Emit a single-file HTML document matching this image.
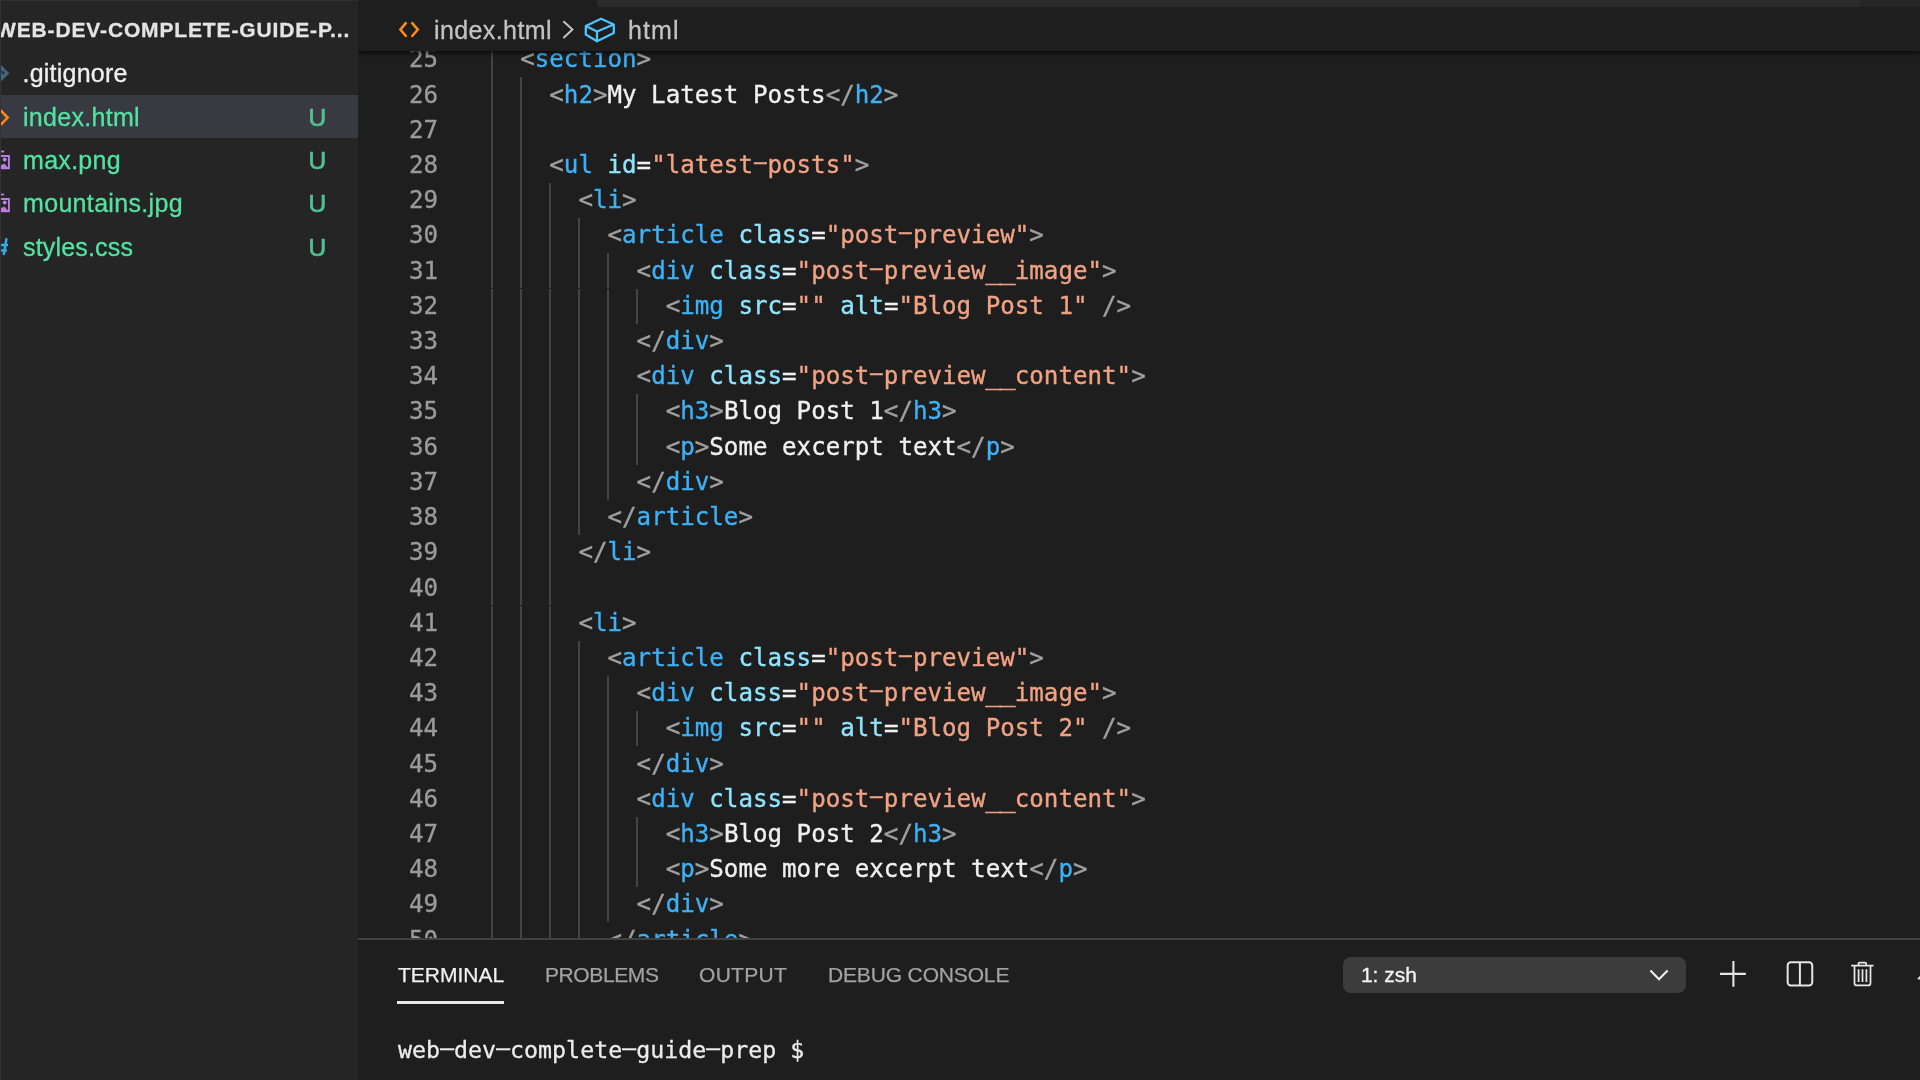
<!DOCTYPE html>
<html lang="en">
<head>
<meta charset="utf-8">
<title>index.html — web-dev-complete-guide-prep</title>
<style>
*{box-sizing:border-box;margin:0;padding:0}
html,body{width:1920px;height:1080px;overflow:hidden;background:#1e1e1e}
body{position:relative;font-family:"Liberation Sans",sans-serif;color:#ccc}
.abs{position:absolute}
.fg{position:absolute;left:0;top:0;width:100%;height:100%;will-change:transform}
/* ---------- sidebar ---------- */
#side{position:absolute;left:0;top:0;width:358px;height:1080px;background:#252526;overflow:hidden}
#side .hdr{position:absolute;left:-4px;top:16.5px;font-weight:bold;font-size:21px;line-height:26px;letter-spacing:.86px;color:#e4e4e4;white-space:nowrap;-webkit-text-stroke:.3px currentColor}
#side .selbg{position:absolute;left:0;top:95px;width:358px;height:43px;background:#393941}
#side .edge{position:absolute;left:0;top:0;width:1px;height:1080px;background:#333336}
#side .topl{position:absolute;left:0;top:0;width:358px;height:1px;background:#303032}
.row{position:absolute;left:0;width:358px;height:43.4px}
.row .nm{position:absolute;left:23px;top:0;line-height:43.4px;font-size:25px;white-space:nowrap;color:#f0f0f0;-webkit-text-stroke:.3px currentColor}
.row.u .nm{color:#52e3a1}
.row .st{position:absolute;left:308.5px;top:0;line-height:43.4px;font-size:24.5px;color:#4fc391;-webkit-text-stroke:.7px currentColor;letter-spacing:0}
.row svg{position:absolute;left:0;top:0}
/* ---------- editor ---------- */
#ed{position:absolute;left:358px;top:0;width:1562px;height:940px;background:#1e1e1e;overflow:hidden}
#edin{will-change:transform;position:absolute;left:-358px;top:0;width:1920px;height:940px}
.ln{position:absolute;left:380px;width:58px;text-align:right;font-family:"DejaVu Sans Mono","Liberation Mono",monospace;font-size:24.167px;line-height:35.21px;height:35.21px;color:#9a9a9a;white-space:pre}
.cl{position:absolute;font-family:"DejaVu Sans Mono","Liberation Mono",monospace;font-size:24.167px;line-height:35.21px;height:35.21px;white-space:pre;color:#e4e4e4}
.t{color:#3db1f7}.b{color:#a0a0a0}.a{color:#8fe4fd}.s{color:#f0a283}.x{color:#f0f0f0}
.cl,.ln{-webkit-text-stroke:.35px currentColor}
.us{display:inline-block;transform:scaleX(1.12)}
.h{display:inline-block;transform:translateY(-2.7px) scale(2,.85)}
.g{position:absolute;width:2px;background:#444;margin-top:-.2px}
.gap{position:absolute;left:480px;width:170px;height:1.4px;background:#1e1e1e}
#crumbwrap{position:absolute;left:358px;top:0;width:1562px;height:70px;overflow:hidden;z-index:5}
#crumb{position:absolute;left:0;top:0;width:1562px;height:51px;background:#1e1e1e;box-shadow:0 2px 5px rgba(0,0,0,.7)}
#crumb .strip2{position:absolute;left:1502px;top:0;right:0;height:7px;background:#262627}
#crumb .strip{position:absolute;left:239px;top:0;right:0;height:7px;background:#2b2b2c}
#crumb .tx{position:absolute;top:12px;line-height:36px;font-size:25px;color:#c2c2c2;white-space:nowrap;-webkit-text-stroke:.3px currentColor}
/* ---------- panel ---------- */
#panel{position:absolute;left:358px;top:938px;width:1562px;height:142px;background:#1e1e1e;border-top:2px solid #414141;z-index:6}
.tab{position:absolute;top:21px;font-size:21px;line-height:28px;color:#a2a2a2;white-space:nowrap;-webkit-text-stroke:.25px currentColor}
.tab.on{color:#f0f0f0}
.tab.on:after{content:"";position:absolute;left:-1px;right:0;top:40px;height:3px;background:#e7e7e7}
#term{position:absolute;left:40px;top:93px;font-family:"DejaVu Sans Mono","Liberation Mono",monospace;font-size:23.27px;line-height:34px;color:#ececec;white-space:pre;-webkit-text-stroke:.3px currentColor}
#sel{position:absolute;left:985.4px;top:16.6px;width:342.2px;height:36px;border-radius:8px;background:#3c3c3c}
#sel span{position:absolute;left:17.5px;top:0;line-height:36px;font-size:21px;color:#f4f4f4;-webkit-text-stroke:.3px currentColor}
#term .h{transform:translateY(-1.7px) scale(2.3,.85)}
</style>
</head>
<body>
<div id="side">
  <div class="selbg"></div>
  <div class="fg">
  <div class="hdr">WEB-DEV-COMPLETE-GUIDE-P...</div>
  <div class="row" style="top:51.6px"><svg width="20" height="44" viewBox="0 0 20 44"><path d="M-9.3 21.2 L0 11.9 L9.3 21.2 L0 30.5 Z" fill="#3f6777"/><path d="M-2 17.2 L3.2 20.6" stroke="#26343b" stroke-width="1.2" fill="none"/><circle cx="3.3" cy="20.8" r="1.4" fill="#26343b"/></svg><span class="nm" style="left:22.5px;letter-spacing:.22px">.gitignore</span></div>
  <div class="row u" style="top:95.6px"><svg width="20" height="44" viewBox="0 0 20 44"><path d="M0.6 14.3 L7.6 21.6 L0.6 28.9" fill="none" stroke="#ff8a17" stroke-width="2.6"/></svg><span class="nm" style="letter-spacing:.3px">index.html</span><span class="st">U</span></div>
  <div class="row u" style="top:138.9px"><svg width="20" height="44" viewBox="0 0 20 44"><path d="M-3 12.5 H4.2" stroke="#b97ee0" stroke-width="1.8"/><path d="M-8 17 H8.9 V29.4 H-8 Z" fill="none" stroke="#b97ee0" stroke-width="1.9"/><circle cx="4.7" cy="20.6" r="2" fill="#b97ee0"/><path d="M-8 29.4 L-1.5 22.8 L1.6 26 L4.3 24.6 L8.9 29.4 Z" fill="#b97ee0"/></svg><span class="nm" style="letter-spacing:.3px">max.png</span><span class="st">U</span></div>
  <div class="row u" style="top:182.3px"><svg width="20" height="44" viewBox="0 0 20 44"><path d="M-3 12.5 H4.2" stroke="#b97ee0" stroke-width="1.8"/><path d="M-8 17 H8.9 V29.4 H-8 Z" fill="none" stroke="#b97ee0" stroke-width="1.9"/><circle cx="4.7" cy="20.6" r="2" fill="#b97ee0"/><path d="M-8 29.4 L-1.5 22.8 L1.6 26 L4.3 24.6 L8.9 29.4 Z" fill="#b97ee0"/></svg><span class="nm" style="letter-spacing:.33px">mountains.jpg</span><span class="st">U</span></div>
  <div class="row u" style="top:225.7px"><svg width="20" height="44" viewBox="0 0 20 44"><path d="M-2 19 H8 M-3 24.4 H7 M6.5 12.3 L3.7 29 M-0.2 12.3 L-3 29" fill="none" stroke="#36a9e1" stroke-width="2.5"/></svg><span class="nm" style="letter-spacing:.17px">styles.css</span><span class="st">U</span></div>
  </div>
  <div class="edge"></div><div class="topl"></div>
</div>

<div id="ed"><div id="edin">
<div class="g" style="left:491.00px;top:42.34px;height:915.46px"></div>
<div class="g" style="left:520.00px;top:77.56px;height:880.25px"></div>
<div class="g" style="left:549.30px;top:183.19px;height:774.62px"></div>
<div class="g" style="left:578.40px;top:218.40px;height:316.89px"></div>
<div class="g" style="left:578.40px;top:640.92px;height:316.89px"></div>
<div class="g" style="left:606.70px;top:253.60px;height:246.47px"></div>
<div class="g" style="left:606.70px;top:676.12px;height:246.47px"></div>
<div class="g" style="left:635.60px;top:288.81px;height:35.21px"></div>
<div class="g" style="left:635.60px;top:394.45px;height:70.42px"></div>
<div class="g" style="left:635.60px;top:711.34px;height:35.21px"></div>
<div class="g" style="left:635.60px;top:816.97px;height:70.42px"></div>
<div class="gap" style="top:287.6px"></div><div class="gap" style="top:604.6px"></div>
<div class="ln" style="top:42.34px">25</div>
<div class="ln" style="top:77.56px">26</div>
<div class="ln" style="top:112.77px">27</div>
<div class="ln" style="top:147.97px">28</div>
<div class="ln" style="top:183.19px">29</div>
<div class="ln" style="top:218.40px">30</div>
<div class="ln" style="top:253.60px">31</div>
<div class="ln" style="top:288.81px">32</div>
<div class="ln" style="top:324.02px">33</div>
<div class="ln" style="top:359.24px">34</div>
<div class="ln" style="top:394.45px">35</div>
<div class="ln" style="top:429.65px">36</div>
<div class="ln" style="top:464.87px">37</div>
<div class="ln" style="top:500.08px">38</div>
<div class="ln" style="top:535.28px">39</div>
<div class="ln" style="top:570.50px">40</div>
<div class="ln" style="top:605.71px">41</div>
<div class="ln" style="top:640.92px">42</div>
<div class="ln" style="top:676.12px">43</div>
<div class="ln" style="top:711.34px">44</div>
<div class="ln" style="top:746.55px">45</div>
<div class="ln" style="top:781.75px">46</div>
<div class="ln" style="top:816.97px">47</div>
<div class="ln" style="top:852.18px">48</div>
<div class="ln" style="top:887.38px">49</div>
<div class="ln" style="top:922.60px">50</div>
<div class="cl" style="top:42.34px;left:520.20px"><span class="b">&lt;</span><span class="t">section</span><span class="b">&gt;</span></div>
<div class="cl" style="top:77.56px;left:549.30px"><span class="b">&lt;</span><span class="t">h2</span><span class="b">&gt;</span><span class="x">My Latest Posts</span><span class="b">&lt;/</span><span class="t">h2</span><span class="b">&gt;</span></div>
<div class="cl" style="top:147.97px;left:549.30px"><span class="b">&lt;</span><span class="t">ul</span> <span class="a">id</span><span class="x">=</span><span class="s">&quot;latest<span class="h">-</span>posts&quot;</span><span class="b">&gt;</span></div>
<div class="cl" style="top:183.19px;left:578.40px"><span class="b">&lt;</span><span class="t">li</span><span class="b">&gt;</span></div>
<div class="cl" style="top:218.40px;left:607.50px"><span class="b">&lt;</span><span class="t">article</span> <span class="a">class</span><span class="x">=</span><span class="s">&quot;post<span class="h">-</span>preview&quot;</span><span class="b">&gt;</span></div>
<div class="cl" style="top:253.60px;left:636.60px"><span class="b">&lt;</span><span class="t">div</span> <span class="a">class</span><span class="x">=</span><span class="s">&quot;post<span class="h">-</span>preview<span class="us">_</span><span class="us">_</span>image&quot;</span><span class="b">&gt;</span></div>
<div class="cl" style="top:288.81px;left:665.70px"><span class="b">&lt;</span><span class="t">img</span> <span class="a">src</span><span class="x">=</span><span class="s">&quot;&quot;</span> <span class="a">alt</span><span class="x">=</span><span class="s">&quot;Blog Post 1&quot;</span> <span class="b">/&gt;</span></div>
<div class="cl" style="top:324.02px;left:636.60px"><span class="b">&lt;/</span><span class="t">div</span><span class="b">&gt;</span></div>
<div class="cl" style="top:359.24px;left:636.60px"><span class="b">&lt;</span><span class="t">div</span> <span class="a">class</span><span class="x">=</span><span class="s">&quot;post<span class="h">-</span>preview<span class="us">_</span><span class="us">_</span>content&quot;</span><span class="b">&gt;</span></div>
<div class="cl" style="top:394.45px;left:665.70px"><span class="b">&lt;</span><span class="t">h3</span><span class="b">&gt;</span><span class="x">Blog Post 1</span><span class="b">&lt;/</span><span class="t">h3</span><span class="b">&gt;</span></div>
<div class="cl" style="top:429.65px;left:665.70px"><span class="b">&lt;</span><span class="t">p</span><span class="b">&gt;</span><span class="x">Some excerpt text</span><span class="b">&lt;/</span><span class="t">p</span><span class="b">&gt;</span></div>
<div class="cl" style="top:464.87px;left:636.60px"><span class="b">&lt;/</span><span class="t">div</span><span class="b">&gt;</span></div>
<div class="cl" style="top:500.08px;left:607.50px"><span class="b">&lt;/</span><span class="t">article</span><span class="b">&gt;</span></div>
<div class="cl" style="top:535.28px;left:578.40px"><span class="b">&lt;/</span><span class="t">li</span><span class="b">&gt;</span></div>
<div class="cl" style="top:605.71px;left:578.40px"><span class="b">&lt;</span><span class="t">li</span><span class="b">&gt;</span></div>
<div class="cl" style="top:640.92px;left:607.50px"><span class="b">&lt;</span><span class="t">article</span> <span class="a">class</span><span class="x">=</span><span class="s">&quot;post<span class="h">-</span>preview&quot;</span><span class="b">&gt;</span></div>
<div class="cl" style="top:676.12px;left:636.60px"><span class="b">&lt;</span><span class="t">div</span> <span class="a">class</span><span class="x">=</span><span class="s">&quot;post<span class="h">-</span>preview<span class="us">_</span><span class="us">_</span>image&quot;</span><span class="b">&gt;</span></div>
<div class="cl" style="top:711.34px;left:665.70px"><span class="b">&lt;</span><span class="t">img</span> <span class="a">src</span><span class="x">=</span><span class="s">&quot;&quot;</span> <span class="a">alt</span><span class="x">=</span><span class="s">&quot;Blog Post 2&quot;</span> <span class="b">/&gt;</span></div>
<div class="cl" style="top:746.55px;left:636.60px"><span class="b">&lt;/</span><span class="t">div</span><span class="b">&gt;</span></div>
<div class="cl" style="top:781.75px;left:636.60px"><span class="b">&lt;</span><span class="t">div</span> <span class="a">class</span><span class="x">=</span><span class="s">&quot;post<span class="h">-</span>preview<span class="us">_</span><span class="us">_</span>content&quot;</span><span class="b">&gt;</span></div>
<div class="cl" style="top:816.97px;left:665.70px"><span class="b">&lt;</span><span class="t">h3</span><span class="b">&gt;</span><span class="x">Blog Post 2</span><span class="b">&lt;/</span><span class="t">h3</span><span class="b">&gt;</span></div>
<div class="cl" style="top:852.18px;left:665.70px"><span class="b">&lt;</span><span class="t">p</span><span class="b">&gt;</span><span class="x">Some more excerpt text</span><span class="b">&lt;/</span><span class="t">p</span><span class="b">&gt;</span></div>
<div class="cl" style="top:887.38px;left:636.60px"><span class="b">&lt;/</span><span class="t">div</span><span class="b">&gt;</span></div>
<div class="cl" style="top:922.60px;left:607.50px"><span class="b">&lt;/</span><span class="t">article</span><span class="b">&gt;</span></div>
</div></div>

<div id="crumbwrap"><div id="crumb">
  <div class="strip"></div><div class="strip2"></div>
  <div class="fg">
  <svg class="abs" style="left:38px;top:18px" width="28" height="24" viewBox="0 0 28 24"><path d="M10.4 4.4 L4.4 11.6 L10.4 18.8 M15.6 4.4 L21.8 11.6 L15.6 18.8" fill="none" stroke="#ff8a17" stroke-width="2.5"/></svg>
  <span class="tx" style="left:76px;letter-spacing:.4px">index.html</span>
  <svg class="abs" style="left:200px;top:18px" width="20" height="24" viewBox="0 0 20 24"><path d="M5.4 3.2 L14.4 11.6 L5.4 20" fill="none" stroke="#c4c4c4" stroke-width="2"/></svg>
  <svg class="abs" style="left:225px;top:14px" width="34" height="32" viewBox="0 0 34 32"><path d="M2.8 12 L18 4.7 L30.8 10.5 L14 17.5 Z M2.8 12 L2.8 20.5 L14 27.3 L14 17.5 M14 27.3 L30.8 19 L30.8 10.5" fill="none" stroke="#4cc4ff" stroke-width="2.3" stroke-linejoin="round"/></svg>
  <span class="tx" style="left:270px;letter-spacing:1.1px">html</span>
  </div>
</div></div>

<div id="panel">
  <div class="fg">
  <span class="tab on" style="left:40px">TERMINAL</span>
  <span class="tab" style="left:187px;letter-spacing:-.4px">PROBLEMS</span>
  <span class="tab" style="left:341px;letter-spacing:.3px">OUTPUT</span>
  <span class="tab" style="left:470px;letter-spacing:-.15px">DEBUG CONSOLE</span>
  <div id="sel"><span>1: zsh</span>
    <svg class="abs" style="left:300px;top:8px" width="30" height="20" viewBox="0 0 30 20"><path d="M7.4 5.6 L16 14.2 L24.6 5.6" fill="none" stroke="#f0f0f0" stroke-width="2.1"/></svg>
  </div>
  <svg class="abs" style="left:1359px;top:18px" width="32" height="32" viewBox="0 0 32 32"><path d="M16.4 3 V28.8 M3 15.9 H28.8" fill="none" stroke="#e6e6e6" stroke-width="2.1"/></svg>
  <svg class="abs" style="left:1426px;top:18px" width="32" height="32" viewBox="0 0 32 32"><rect x="3.65" y="4.25" width="24.6" height="23.3" rx="3.2" fill="none" stroke="#e6e6e6" stroke-width="2"/><path d="M15.9 4 V28" stroke="#e6e6e6" stroke-width="2"/></svg>
  <svg class="abs" style="left:1488px;top:18px" width="32" height="32" viewBox="0 0 32 32"><path d="M5.2 7.6 H27.5 M12.5 7.6 V5.5 Q12.5 4.5 13.5 4.5 H19.2 Q20.2 4.5 20.2 5.5 V7.6 M8.5 7.6 V25.2 Q8.5 27.4 10.7 27.4 H22.3 Q24.5 27.4 24.5 25.2 V7.6 M12.6 11.2 V24 M16.5 11.2 V24 M20.4 11.2 V24" fill="none" stroke="#e6e6e6" stroke-width="1.75"/></svg>
  <svg class="abs" style="left:1552px;top:30px" width="10" height="12" viewBox="0 0 10 12"><path d="M8.2 9.2 L10.6 6.8" fill="none" stroke="#e6e6e6" stroke-width="2"/></svg>
  <div id="term">web<span class="h">-</span>dev<span class="h">-</span>complete<span class="h">-</span>guide<span class="h">-</span>prep $</div>
  </div>
</div>
</body>
</html>
